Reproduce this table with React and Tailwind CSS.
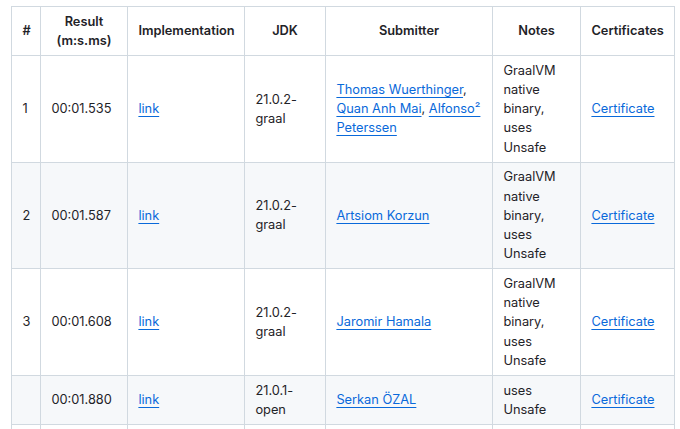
import React from "react";

const rows = [
  {
    n: "1",
    r: "00:01.535",
    jdk: "21.0.2-graal",
    sub: (
      <>
        <A>Thomas Wuerthinger</A>, <A>Quan Anh Mai</A>, <A>Alfonso² Peterssen</A>
      </>
    ),
    notes: "GraalVM native binary, uses Unsafe",
  },
  { n: "2", r: "00:01.587", jdk: "21.0.2-graal", sub: <A>Artsiom Korzun</A>, notes: "GraalVM native binary, uses Unsafe" },
  { n: "3", r: "00:01.608", jdk: "21.0.2-graal", sub: <A>Jaromir Hamala</A>, notes: "GraalVM native binary, uses Unsafe" },
  { n: "", r: "00:01.880", jdk: "21.0.1-open", sub: <A>Serkan ÖZAL</A>, notes: "uses Unsafe" },
  { n: "", r: "", jdk: "", sub: null, notes: "", empty: true },
];

function A({ children }) {
  return (
    <a className="text-[#0969da] underline underline-offset-[2.6px] decoration-[1px]" href="#">
      {children}
    </a>
  );
}

const th = "border border-[#d1d9e0] px-[10.4px] py-[4.8px] font-semibold text-center align-middle";
const td = "border border-[#d1d9e0] px-[10.4px] py-[4.8px] align-middle text-left";

export default function App() {
  return (
    <div
      className="w-[680px] h-[429px] overflow-hidden bg-white text-[#1f2328] text-[12.8px] leading-[19.2px] pt-[6px] pl-[11px]"
      style={{ fontFamily: "Inter, 'Noto Sans', sans-serif" }}
    >
      <table className="border-collapse table-fixed w-[663px]">
        <colgroup>
          <col className="w-[29px]" />
          <col className="w-[87px]" />
          <col className="w-[117px]" />
          <col className="w-[81px]" />
          <col className="w-[167px]" />
          <col className="w-[88px]" />
          <col className="w-[94px]" />
        </colgroup>
        <thead>
          <tr className="bg-white">
            <th className={th}>#</th>
            <th className={th}>Result (m:s.ms)</th>
            <th className={th}>Implementation</th>
            <th className={th}>JDK</th>
            <th className={th}>Submitter</th>
            <th className={th}>Notes</th>
            <th className={th}>Certificates</th>
          </tr>
        </thead>
        <tbody>
          {rows.map((row, i) => (
            <tr key={i} className={i % 2 === 1 ? "bg-[#f6f8fa]" : "bg-white"}>
              <td className={td}>{row.n}</td>
              <td className={td}>{row.r}</td>
              <td className={td}>{row.empty ? "\u00a0" : <A>link</A>}</td>
              <td className={td}>{row.jdk}</td>
              <td className={td}>{row.sub}</td>
              <td className={td}>{row.notes}</td>
              <td className={td}>{row.empty ? "" : <A>Certificate</A>}</td>
            </tr>
          ))}
        </tbody>
      </table>
    </div>
  );
}
